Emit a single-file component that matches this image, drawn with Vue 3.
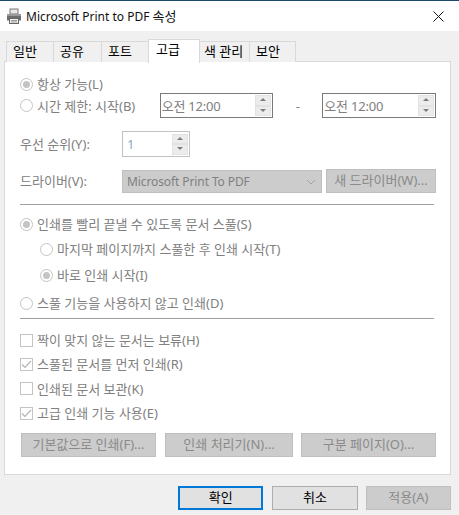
<script setup>
const tabs = ['일반', '공유', '포트', '고급', '색 관리', '보안']
const checks = [
  { text: '짝이 맞지 않는 문서는 보류(H)', on: false },
  { text: '스풀된 문서를 먼저 인쇄(R)', on: true },
  { text: '인쇄된 문서 보관(K)', on: false },
  { text: '고급 인쇄 기능 사용(E)', on: true },
]
</script>

<template>
  <div class="win">
    <header class="title">
      <svg class="pr" width="18" height="18" viewBox="0 0 18 18">
        <rect x="5" y="2" width="8" height="5" fill="#e8e8e8" stroke="#777" />
        <path d="M2 7.5h14v6H2z" fill="#6d6d6d" />
        <rect x="2" y="7" width="14" height="2" fill="#9a9a9a" />
        <rect x="4.5" y="11.5" width="9" height="5" fill="#f2f2f2" stroke="#666" />
        <path d="M6 13.5h6M6 15h6" stroke="#999" />
      </svg>
      <span class="tt">Microsoft Print to PDF <span class="ko">속성</span></span>
      <svg class="x" width="11" height="11" viewBox="0 0 11 11"><path d="M.5.5l10 10M10.5.5l-10 10" stroke="#111" fill="none" /></svg>
    </header>

    <main class="body">
      <nav class="tabs">
        <div v-for="(t, i) in tabs" :key="t" class="tab" :class="['t' + i, { active: i === 3 }]">{{ t }}</div>
      </nav>

      <section class="panel">
        <label class="opt r1"><i class="radio on"></i>항상 가능(L)</label>
        <div class="row-time">
          <label class="opt"><i class="radio"></i>시간 제한: 시작(B)</label>
          <div class="time first">
            <span>오전 12:00</span>
            <div class="spin"><b class="up"></b><b class="dn"></b></div>
          </div>
          <span class="dash">-</span>
          <div class="time">
            <span>오전 12:00</span>
            <div class="spin"><b class="up"></b><b class="dn"></b></div>
          </div>
        </div>
        <div class="row-pri">
          <span class="lbl">우선 순위(Y):</span>
          <div class="pri"><span>1</span><div class="spin"><b class="up"></b><b class="dn"></b></div></div>
        </div>
        <div class="row-drv">
          <span class="lbl">드라이버(V):</span>
          <div class="select">
            <span>Microsoft Print To PDF</span>
            <svg width="10" height="6" viewBox="0 0 10 6"><path d="M1 1l4 4 4-4" fill="none" stroke="#a2a2a2" /></svg>
          </div>
          <div class="btn newd">새 드라이버(W)...</div>
        </div>
        <hr class="sep s1" />
        <label class="opt r2"><i class="radio on"></i>인쇄를 빨리 끝낼 수 있도록 문서 스풀(S)</label>
        <label class="opt r3"><i class="radio"></i>마지막 페이지까지 스풀한 후 인쇄 시작(T)</label>
        <label class="opt r4"><i class="radio on"></i>바로 인쇄 시작(I)</label>
        <label class="opt r5"><i class="radio"></i>스풀 기능을 사용하지 않고 인쇄(D)</label>
        <hr class="sep s2" />
        <div class="checks">
          <label v-for="c in checks" :key="c.text" class="opt chk">
            <i class="box">
              <svg v-if="c.on" width="11" height="9" viewBox="0 0 11 9"><path d="M1 4.5l3 3 6-6.5" fill="none" stroke="#b4b4b4" stroke-width="1.2" /></svg>
            </i>{{ c.text }}
          </label>
        </div>
        <div class="btnrow">
          <div class="btn b1">기본값으로 인쇄(F)...</div>
          <div class="btn b2">인쇄 처리기(N)...</div>
          <div class="btn b3">구분 페이지(O)...</div>
        </div>
      </section>

      <footer class="foot">
        <div class="fb ok">확인</div>
        <div class="fb cancel">취소</div>
        <div class="fb off">적용(A)</div>
      </footer>
    </main>
  </div>
</template>

<style>
html, body { margin: 0; background: #f0f0f0; }
</style>

<style scoped>
.win {
  width: 459px; height: 515px; overflow: hidden; box-sizing: border-box;
  border-top: 1px solid #1d4a6b; background: #f0f0f0;
  font: 13px/16px "Noto Sans", "Noto Sans CJK KR", sans-serif; color: #000;
}
.title { height: 30px; background: #fff; display: flex; align-items: center; padding: 0 15px 0 5px; }
.pr { margin-right: 3px; }
.tt { flex: 1; font-size: 12px; color: #111; }
.ko { font-size: 13px; }
.body { padding: 8px 8px 0 4px; }
.tabs { display: flex; height: 23px; padding-left: 2px; align-items: flex-end; position: relative; z-index: 1; }
.tab {
  box-sizing: border-box; height: 21px; margin-left: -1px; border: 1px solid #d9d9d9; border-bottom: 0;
  background: #f0f0f0; padding-left: 6px; line-height: 18px; white-space: nowrap;
}
.t0 { width: 48px; margin-left: 0; } .t1 { width: 49px; } .t2 { width: 48px; } .t4 { width: 51px; padding-left: 4px; } .t5 { width: 47px; }
.active { width: 52px; background: #fff; margin-bottom: -1px; height: 24px; padding-left: 7px; line-height: 18px; position: relative; z-index: 1; }
.panel {
  box-sizing: border-box; width: 447px; height: 414px; background: #fff; border: 1px solid #d9d9d9; margin-top: -1px;
  padding: 0 14px 0 15px; color: #808080;
}
.opt { display: flex; align-items: center; height: 16px; white-space: nowrap; }
.radio {
  box-sizing: border-box; width: 13px; height: 13px; border-radius: 50%; border: 1px solid #c4c4c4;
  background: #fff; margin-right: 4px; flex: none; position: relative;
}
.radio.on::after { content: ""; position: absolute; inset: 2px; border-radius: 50%; background: #c4c4c4; }
.r1 { margin-top: 14px; }
.row-time { display: flex; align-items: center; margin-top: 1px; height: 25px; }
.row-time .opt { width: 140px; }
.time {
  box-sizing: border-box; width: 114px; height: 25px; border: 1px solid #7a7a7a; display: flex; align-items: center;
  justify-content: space-between; padding: 0 1px 0 1px; background: #fff; letter-spacing: -.2px;
}
.dash { width: 49px; text-align: center; }
.spin { width: 16px; height: 21px; display: flex; flex-direction: column; flex: none; }
.spin b { flex: 1; background: #ececec; border: 1px solid #e2e2e2; position: relative; }
.spin b::after {
  content: ""; position: absolute; left: 4px; top: 2px; border-left: 3px solid transparent; border-right: 3px solid transparent;
}
.up::after { border-bottom: 3px solid #7d7d7d; }
.dn::after { border-top: 3px solid #7d7d7d; }
.row-pri { display: flex; align-items: center; margin-top: 13px; height: 26px; }
.lbl { width: 102px; flex: none; }
.pri {
  box-sizing: border-box; width: 68px; height: 26px; border: 1px solid #c2c2c2; display: flex; align-items: center;
  justify-content: space-between; padding: 0 1px 0 4px; color: #8aa9c4;
}
.row-drv { display: flex; align-items: flex-end; margin-top: 12px; height: 24px; }
.row-drv .lbl { align-self: center; }
.select {
  box-sizing: border-box; width: 200px; height: 23px; background: #cccccc; border: 1px solid #c0c0c0; display: flex;
  align-items: center; justify-content: space-between; padding: 0 5px 0 4px; margin-right: 4px; font-size: 12px; letter-spacing: -.1px;
}
.btn {
  box-sizing: border-box; height: 24px; background: #cccccc; border: 1px solid #bfbfbf; text-align: center; line-height: 20px; color: #8a8a8a; white-space: nowrap;
}
.newd { width: 110px; }
.sep { border: 0; border-top: 1px solid #a0a0a0; margin: 0; width: 414px; height: 0; }
.s1 { margin-top: 11px; }
.r2 { margin-top: 11px; }
.r3 { margin-top: 9px; padding-left: 20px; }
.r4 { margin-top: 10px; padding-left: 20px; }
.r5 { margin-top: 12px; }
.s2 { margin-top: 7px; }
.checks { display: flex; flex-direction: column; gap: 8.4px; margin-top: 13px; }
.box {
  box-sizing: border-box; width: 13px; height: 13px; border: 1px solid #c4c4c4; background: #fff; margin-right: 4px; flex: none;
  display: flex; align-items: center; justify-content: center;
}
.btnrow { display: flex; margin-top: 11.8px; padding-left: 1px; }
.b1 { width: 135px; margin-right: 9px; }
.b2 { width: 128px; margin-right: 8px; }
.b3 { width: 135px; }
.foot { display: flex; margin-top: 11px; padding-left: 174px; }
.fb {
  box-sizing: border-box; width: 86px; height: 24px; background: #e1e1e1; border: 1px solid #adadad; text-align: center; line-height: 21px; color: #000;
}
.ok { border: 2px solid #0078d7; line-height: 19px; }
.cancel { margin: 0 8px 0 9px; }
.off { background: #cccccc; border-color: #bfbfbf; color: #8a8a8a; }
</style>
